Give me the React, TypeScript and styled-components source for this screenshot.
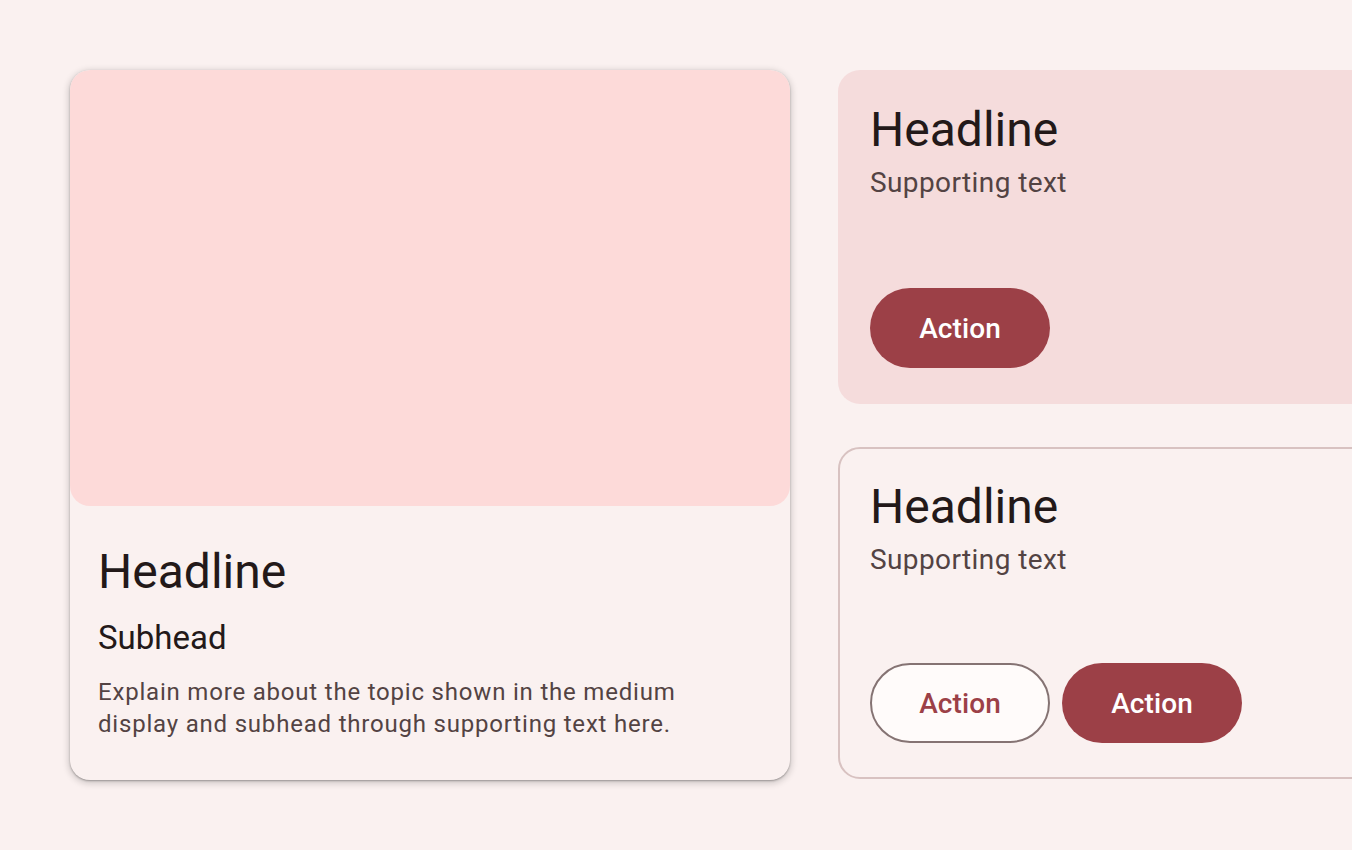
import React from 'react'
import styled, { createGlobalStyle } from 'styled-components'

const GlobalStyle = createGlobalStyle`
  html, body {
    margin: 0;
    padding: 0;
    background: #faf1f0;
    font-family: Roboto, "Noto Sans", sans-serif;
    overflow: hidden;
  }
`

const Page = styled.main`
  display: flex;
  align-items: flex-start;
  gap: 48px;
  padding: 70px 0 0 70px;
  width: 1400px;
  height: 850px;
  box-sizing: border-box;
`

const ElevatedCard = styled.section`
  width: 720px;
  height: 710px;
  flex-shrink: 0;
  border-radius: 20px;
  background: #faf1f0;
  box-shadow: 0 1px 2px rgba(0, 0, 0, 0.3), 0 2px 6px 2px rgba(0, 0, 0, 0.15);
  display: flex;
  flex-direction: column;
  overflow: hidden;
`

const Media = styled.div`
  height: 436px;
  background: #fddad9;
  border-radius: 20px;
`

const CardBody = styled.div`
  padding: 38px 28px 0;
  display: flex;
  flex-direction: column;
`

const Headline = styled.h2`
  margin: 0;
  font-size: 48px;
  line-height: 56px;
  font-weight: 400;
  color: #231919;
`

const Subhead = styled.h3`
  margin: 18px 0 0;
  font-size: 33px;
  line-height: 40px;
  font-weight: 400;
  color: #231919;
`

const Body = styled.p`
  margin: 18px 0 0;
  max-width: 600px;
  font-size: 24px;
  line-height: 32px;
  letter-spacing: 0.8px;
  color: #534343;
`

const Column = styled.div`
  display: flex;
  flex-direction: column;
  gap: 43px;
  width: 560px;
  flex-shrink: 0;
`

const SideCard = styled.section<{ $outlined?: boolean; $height: number }>`
  height: ${(p) => p.$height}px;
  box-sizing: border-box;
  border-radius: 22px;
  padding: ${(p) => (p.$outlined ? '30px 30px 34px' : '32px 32px 36px')};
  background: ${(p) => (p.$outlined ? '#faf1f0' : '#f5dcdc')};
  border: ${(p) => (p.$outlined ? '2px solid #d8c2c1' : 'none')};
  display: flex;
  flex-direction: column;
`

const Supporting = styled.p`
  margin: 7px 0 0;
  font-size: 28px;
  line-height: 36px;
  letter-spacing: 0.4px;
  color: #534343;
`

const Actions = styled.div`
  margin-top: auto;
  display: flex;
  gap: 12px;
`

const Button = styled.button<{ $outlined?: boolean }>`
  width: 180px;
  height: 80px;
  border-radius: 40px;
  box-sizing: border-box;
  font-family: Roboto, "Noto Sans", sans-serif;
  font-size: 28px;
  font-weight: 500;
  letter-spacing: 0.1px;
  cursor: pointer;
  background: ${(p) => (p.$outlined ? '#fffbfa' : '#9c4047')};
  color: ${(p) => (p.$outlined ? '#9c4047' : '#ffffff')};
  border: ${(p) => (p.$outlined ? '2px solid #857373' : 'none')};
`

export default function App() {
  return (
    <>
      <GlobalStyle />
      <Page>
        <ElevatedCard>
          <Media />
          <CardBody>
            <Headline>Headline</Headline>
            <Subhead>Subhead</Subhead>
            <Body>
              Explain more about the topic shown in the medium display and subhead through
              supporting text here.
            </Body>
          </CardBody>
        </ElevatedCard>
        <Column>
          <SideCard $height={334}>
            <Headline>Headline</Headline>
            <Supporting>Supporting text</Supporting>
            <Actions>
              <Button>Action</Button>
            </Actions>
          </SideCard>
          <SideCard $outlined $height={332}>
            <Headline>Headline</Headline>
            <Supporting>Supporting text</Supporting>
            <Actions>
              <Button $outlined>Action</Button>
              <Button>Action</Button>
            </Actions>
          </SideCard>
        </Column>
      </Page>
    </>
  )
}
